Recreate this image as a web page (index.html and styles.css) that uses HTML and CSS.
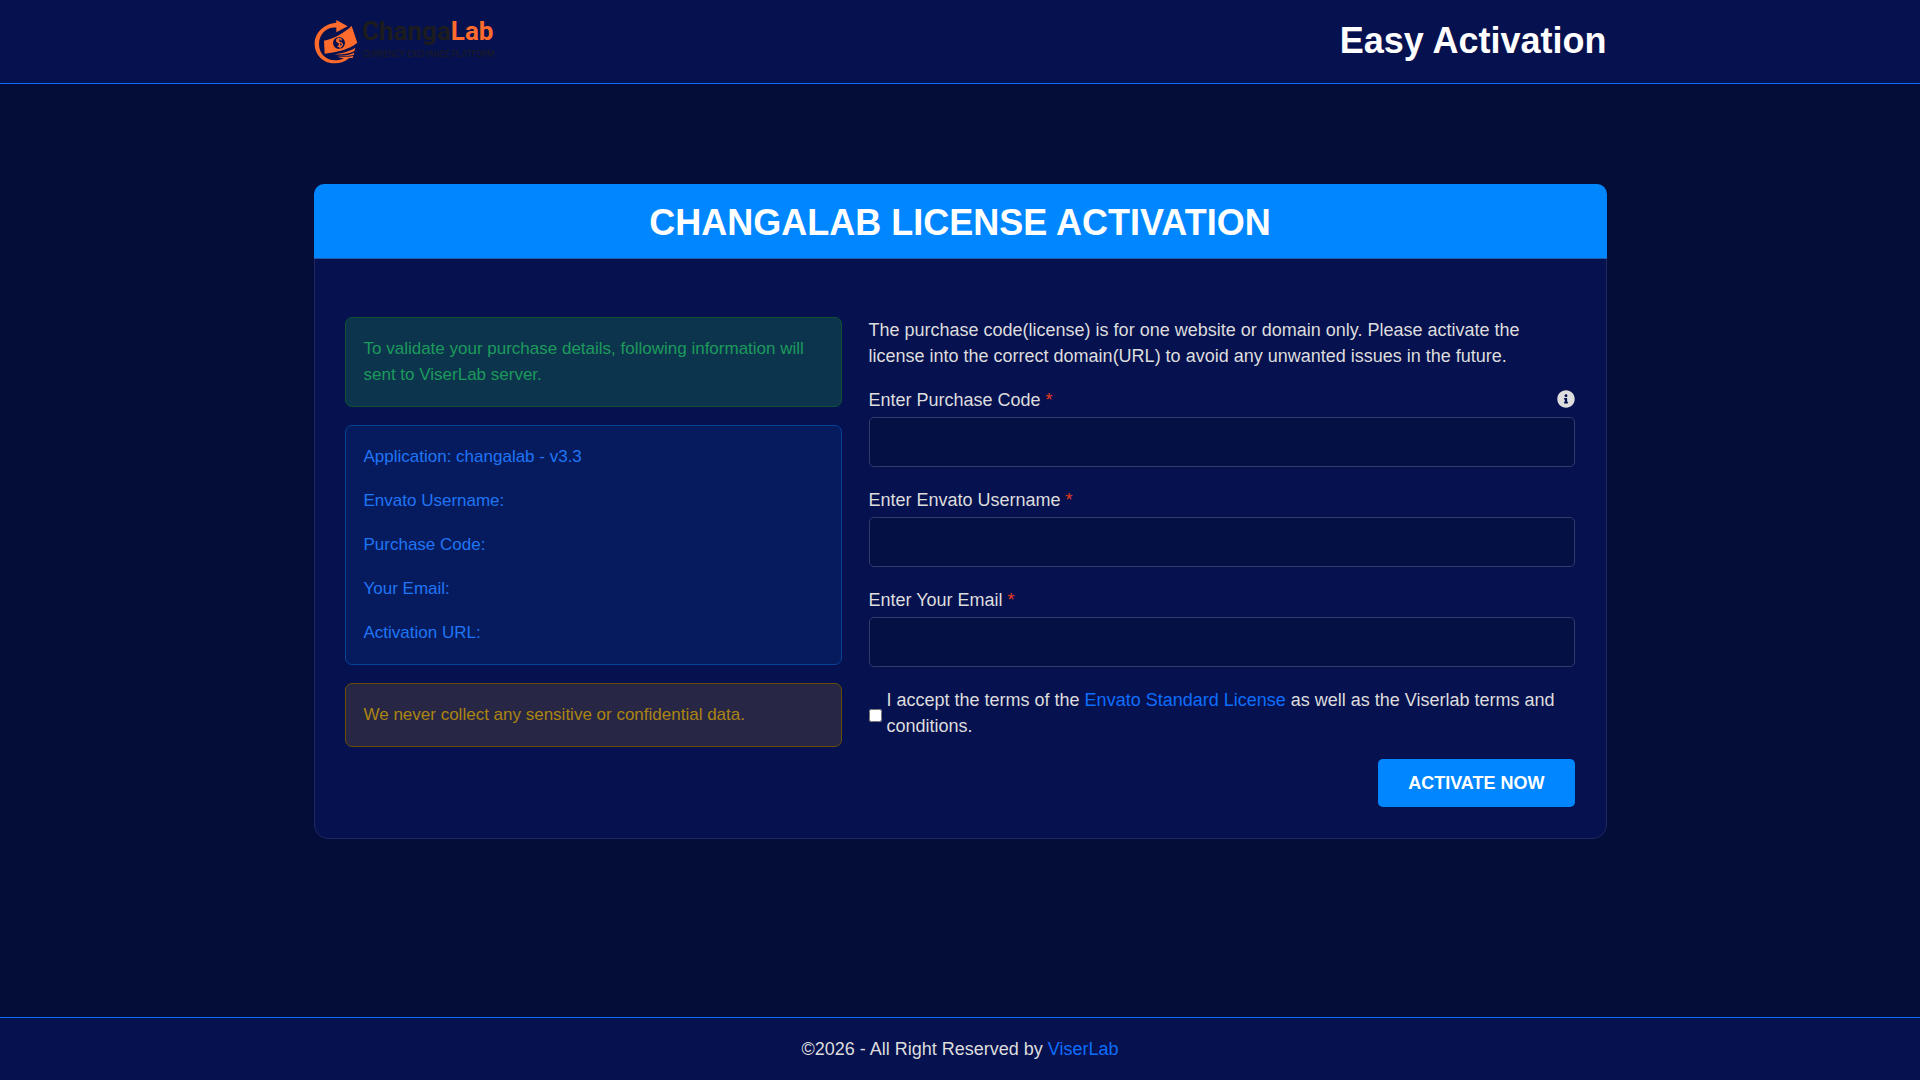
FILE: index.html
```html
<!DOCTYPE html>
<html lang="en">
<head>
  <meta charset="utf-8">
  <meta name="viewport" content="width=device-width, initial-scale=1">
  <title>Easy Activation</title>
  <link rel="stylesheet" href="styles.css">
</head>
<body>
  <header class="site-header">
    <div class="container site-header-inner">
      <a class="logo" href="#" aria-label="ChangaLab">
        <svg viewBox="0 -30 546 168" role="img" aria-hidden="true">
          <g fill="#ff6b2c">
            <path d="M67 8v-8l34 19-34 18v-14C38 20 15 42 15 73c0 30 23 48 47 48 14 0 25-4 34-11l10 3c-11 11-27 17-44 17C27 130 2 104 2 71 2 37 32 10 67 8z"/>
            <path fill-rule="evenodd" d="M30 62c32-6 58-22 83-44l17 50c-26 21-58 27-98 33zM75 51a18 18 0 1 0 0 36 18 18 0 1 0 0-36z"/>
            <path d="M58 103c25-3 48-8 66-20l-3 11c-19 9-42 10-63 9zM64 106c21 2 41 0 57-8l-2 7c-18 4-38 4-55 1zM70 110c18 1 34 1 48-2l-2 6c-15 1-32 1-46-4z"/>
            <path d="M68 56c11-5 18 0 15 6l-4-1c1-5-9-3-7 1 3 5 16 3 15 12-1 8-13 10-17 5l3-3c4 4 10 1 10-3-1-5-13-2-16-8-1-4-1-7 1-9zM70 52l4 1 7 32-4 1z"/>
          </g>
          <text class="logo-name" x="144" y="61"><tspan>Changa</tspan><tspan class="logo-accent">Lab</tspan></text>
          <text class="logo-tagline" x="146" y="110">CURRENCY EXCHANGE PLATFORM</text>
        </svg>
      </a>
      <h2 class="site-title">Easy Activation</h2>
    </div>
  </header>

  <main class="main">
    <div class="container">
      <section class="card">
        <h1 class="card-title">ChangaLab License Activation</h1>
        <div class="card-body">
          <div class="col-info">
            <div class="alert alert-success">
              <p>To validate your purchase details, following information will sent to ViserLab server.</p>
            </div>
            <div class="alert alert-primary">
              <p>Application: changalab - v3.3</p>
              <p>Envato Username:</p>
              <p>Purchase Code:</p>
              <p>Your Email:</p>
              <p>Activation URL:</p>
            </div>
            <div class="alert alert-warning">
              <p>We never collect any sensitive or confidential data.</p>
            </div>
          </div>
          <form class="col-form">
            <p class="intro">The purchase code(license) is for one website or domain only. Please activate the license into the correct domain(URL) to avoid any unwanted issues in the future.</p>
            <div class="field">
              <div class="field-head">
                <label for="code">Enter Purchase Code <span class="required">*</span></label>
                <a class="info" href="#" aria-label="Where to find the purchase code">
                  <svg viewBox="0 0 512 512" aria-hidden="true"><path fill="currentColor" d="M256 8C119 8 8 119 8 256s111 248 248 248 248-111 248-248S393 8 256 8zm0 110c23 0 42 19 42 42s-19 42-42 42-42-19-42-42 19-42 42-42zm56 254c0 7-5 12-12 12h-88c-7 0-12-5-12-12v-24c0-7 5-12 12-12h12v-64h-12c-7 0-12-5-12-12v-24c0-7 5-12 12-12h64c7 0 12 5 12 12v100h12c7 0 12 5 12 12z"/></svg>
                </a>
              </div>
              <input class="input" id="code" type="text" required>
            </div>
            <div class="field">
              <label for="username">Enter Envato Username <span class="required">*</span></label>
              <input class="input" id="username" type="text" required>
            </div>
            <div class="field">
              <label for="email">Enter Your Email <span class="required">*</span></label>
              <input class="input" id="email" type="email" required>
            </div>
            <div class="terms">
              <input class="terms-box" id="terms" type="checkbox" required>
              <label for="terms">I accept the terms of the <a href="#">Envato Standard License</a> as well as the Viserlab terms and conditions.</label>
            </div>
            <div class="actions">
              <button class="btn" type="submit">Activate Now</button>
            </div>
          </form>
        </div>
      </section>
    </div>
  </main>

  <footer class="site-footer">
    <p>©2026 - All Right Reserved by <a href="#">ViserLab</a></p>
  </footer>
</body>
</html>
```
FILE: styles.css
```css
* {
  box-sizing: border-box;
}

body {
  display: flex;
  flex-direction: column;
  min-height: 100vh;
  margin: 0;
  background: #040c38;
  color: #dddddd;
  font-family: "Liberation Sans", Arial, sans-serif;
  font-size: 18px;
  line-height: 26px;
}

h1,
h2,
p {
  margin: 0;
}

a {
  color: #0d6efd;
  text-decoration: none;
}

.container {
  width: 100%;
  max-width: 1293px;
  margin: 0 auto;
}

.site-header {
  background: #06114f;
  border-bottom: 1px solid #0d6efd;
}

.site-header-inner {
  display: flex;
  justify-content: space-between;
  align-items: flex-start;
  padding: 10px 0 17px;
}

.logo {
  display: block;
}

.logo svg {
  display: block;
  width: 182px;
  height: 56px;
}

.logo-name {
  fill: #1c1c1e;
  font-family: Roboto, sans-serif;
  font-size: 78px;
  font-weight: 700;
}

.logo-accent {
  fill: #ff6b2c;
}

.logo-tagline {
  fill: #1c1c1e;
  font-family: Roboto, sans-serif;
  font-size: 25px;
}

.site-title,
.card-title {
  color: #ffffff;
  font-size: 36px;
  font-weight: 700;
  line-height: 42px;
}

.site-title {
  padding-top: 10px;
}

.main {
  flex: 1;
  padding: 100px 0;
}

.card {
  background: #06114f;
  border: 1px solid #1e2960;
  border-radius: 14px;
}

.card-title {
  margin: -1px -1px 0;
  padding: 18px 16px 14px;
  background: #0087ff;
  border-bottom: 1px solid #1e5ba8;
  border-radius: 10px 10px 0 0;
  text-align: center;
  text-transform: uppercase;
}

.card-body {
  display: flex;
  gap: 27px;
  padding: 58px 31px 31px 30px;
}

.col-info {
  display: flex;
  flex: 497;
  flex-direction: column;
  gap: 18px;
}

.col-form {
  display: flex;
  flex: 706;
  flex-direction: column;
  gap: 20px;
}

.alert {
  display: flex;
  flex-direction: column;
  gap: 18px;
  padding: 18px;
  border: 1px solid;
  border-radius: 7px;
  font-size: 17px;
}

.alert-success {
  background: #0c354d;
  border-color: #0f5132;
  color: #1c9a5c;
}

.alert-primary {
  background: #061b5e;
  border-color: #084298;
  color: #1f75f5;
}

.alert-warning {
  background: #272745;
  border-color: #664d03;
  color: #ac8411;
}

.field {
  display: flex;
  flex-direction: column;
  gap: 4px;
}

.intro {
  margin-bottom: -2px;
}

.field-head {
  display: flex;
  justify-content: space-between;
}

.required {
  color: #e63c1e;
}

.info {
  color: #dddddd;
}

.info svg {
  display: block;
  width: 18px;
  height: 18px;
  margin-top: 3px;
}

.input {
  width: 100%;
  height: 50px;
  padding: 0 16px;
  background: #040f44;
  border: 1px solid #323c6c;
  border-radius: 5px;
  color: #ffffff;
  font: inherit;
}

.terms {
  display: flex;
  align-items: center;
  gap: 5px;
}

.terms-box {
  flex: none;
  width: 13px;
  height: 13px;
  margin: 4px 0 0;
}

.actions {
  display: flex;
  justify-content: flex-end;
}

.btn {
  padding: 11px 30px;
  background: #0087ff;
  border: 0;
  border-radius: 5px;
  color: #ffffff;
  font: inherit;
  font-weight: 700;
  text-transform: uppercase;
}

.site-footer {
  padding: 18px;
  background: #06114f;
  border-top: 1px solid #0d6efd;
  text-align: center;
}
```
